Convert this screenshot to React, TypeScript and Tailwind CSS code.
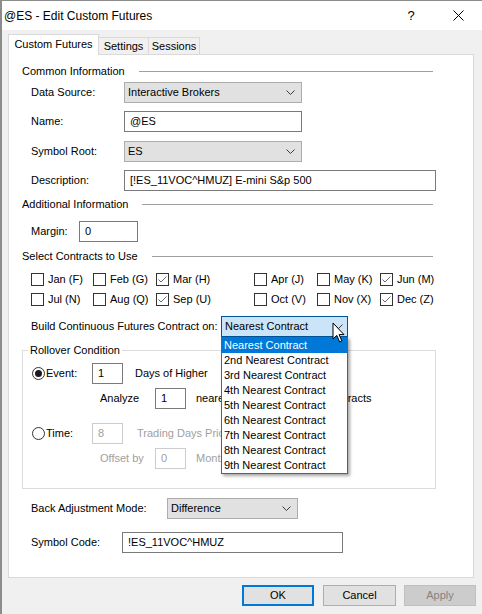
import type { ReactNode } from 'react'

const months: { label: string; checked: boolean }[][] = [
  [
    { label: 'Jan (F)', checked: false },
    { label: 'Feb (G)', checked: false },
    { label: 'Mar (H)', checked: true },
    { label: 'Apr (J)', checked: false },
    { label: 'May (K)', checked: false },
    { label: 'Jun (M)', checked: true },
  ],
  [
    { label: 'Jul (N)', checked: false },
    { label: 'Aug (Q)', checked: false },
    { label: 'Sep (U)', checked: true },
    { label: 'Oct (V)', checked: false },
    { label: 'Nov (X)', checked: false },
    { label: 'Dec (Z)', checked: true },
  ],
]

const contractOptions = [
  'Nearest Contract',
  '2nd Nearest Contract',
  '3rd Nearest Contract',
  '4th Nearest Contract',
  '5th Nearest Contract',
  '6th Nearest Contract',
  '7th Nearest Contract',
  '8th Nearest Contract',
  '9th Nearest Contract',
]

function Chevron() {
  return (
    <svg width="9" height="5" viewBox="0 0 9 5" className="shrink-0">
      <path d="M0.5 0.5 L4.5 4.5 L8.5 0.5" fill="none" stroke="#3c3c3c" strokeWidth="1" />
    </svg>
  )
}

function Select({ value, className }: { value: string; className: string }) {
  return (
    <div className={`h-[21px] flex items-center justify-between pl-[3px] pr-[6px] border bg-[#e1e1e1] border-[#adadad] ${className}`}>
      <span>{value}</span>
      <Chevron />
    </div>
  )
}

function TextBox({ value, className, disabled }: { value: string; className: string; disabled?: boolean }) {
  return (
    <div
      className={`h-[21px] flex items-center pl-[5px] border bg-white ${
        disabled ? 'border-[#cccccc] text-[#a0a0a0]' : 'border-[#7a7a7a]'
      } ${className}`}
    >
      {value}
    </div>
  )
}

function SectionHeading({ title, className }: { title: string; className: string }) {
  return (
    <div className={`ml-[13px] w-[411px] h-[14px] flex items-center ${className}`}>
      <span>{title}</span>
      <div className="flex-1 h-px bg-[#a0a0a0] ml-[14px]" />
    </div>
  )
}

function Field({ label, labelW, className, children }: { label: string; labelW: string; className: string; children: ReactNode }) {
  return (
    <div className={`ml-[22px] flex items-center ${className}`}>
      <span className={labelW}>{label}</span>
      {children}
    </div>
  )
}

function Check({ label, checked }: { label: string; checked: boolean }) {
  return (
    <div className="flex items-center gap-[4px] h-[14px]">
      <span className="w-[13px] h-[13px] border border-[#333333] bg-white flex items-center justify-center">
        {checked && (
          <svg width="9" height="7" viewBox="0 0 9 7">
            <path d="M0.5 3.5 L3 6 L8.5 0.5" fill="none" stroke="#6a6a6a" strokeWidth="1" />
          </svg>
        )}
      </span>
      <span>{label}</span>
    </div>
  )
}

function Radio({ on, label }: { on: boolean; label: string }) {
  return (
    <div className="w-[60px] flex items-center gap-[1px]">
      <span className="w-[13px] h-[13px] rounded-full border border-[#333333] bg-white flex items-center justify-center">
        {on && <span className="w-[7px] h-[7px] rounded-full bg-[#1a1a1a]" />}
      </span>
      <span>{label}</span>
    </div>
  )
}

function Cursor() {
  return (
    <svg width="13" height="21" viewBox="0 0 13 21" className="absolute left-[111px] top-[6px] z-30">
      <path d="M1 1 L1 17 L4.8 13.4 L7.6 19.8 L9.8 18.9 L7.1 12.6 L12 12.6 Z" fill="#ffffff" stroke="#000000" strokeWidth="1" strokeLinejoin="miter" />
    </svg>
  )
}

function ContractCombo() {
  return (
    <div className="relative w-[127px]">
      <div className="h-[21px] flex items-center justify-between pl-[3px] pr-[4px] border bg-[#cce4f7] border-[#005499]">
        <span>Nearest Contract</span>
        <Chevron />
      </div>
      <Cursor />
      <div className="absolute left-0 top-full w-[127px] z-20 bg-white border border-[#2a6cae] shadow-[2px_2px_3px_rgba(0,0,0,0.35)]">
        {contractOptions.map((opt, i) => (
          <div key={opt} className={`h-[15px] leading-[15px] pl-[2px] ${i === 0 ? 'bg-[#0078d7] text-white' : ''}`}>
            {opt}
          </div>
        ))}
      </div>
    </div>
  )
}

export default function App() {
  return (
    <div className="w-[482px] h-[614px] bg-[#f0f0f0] border-l-2 border-t border-[#8c8c8c] font-['Liberation_Sans',Arial,sans-serif] text-[11px] text-black flex flex-col overflow-hidden">
      {/* Title bar */}
      <div className="h-[29px] bg-white flex items-center pl-[2px] shrink-0">
        <span className="text-[12px]">@ES - Edit Custom Futures</span>
        <span className="ml-auto text-[13px] w-[12px] text-center mr-[36px]">?</span>
        <svg width="11" height="11" viewBox="0 0 11 11" className="mr-[18px]">
          <path d="M0.5 0.5 L10.5 10.5 M10.5 0.5 L0.5 10.5" stroke="#000000" strokeWidth="1" />
        </svg>
      </div>

      {/* Tabs */}
      <div className="h-[24px] flex items-end ml-[6px] shrink-0">
        <div className="relative z-10 -mb-px h-[21px] w-[91px] bg-white border border-b-0 border-[#d9d9d9] flex items-center justify-center pb-[2px]">
          Custom Futures
        </div>
        <div className="h-[17px] w-[50px] border-t border-r border-[#d9d9d9] flex items-center justify-center">Settings</div>
        <div className="h-[17px] w-[51px] border-t border-r border-[#d9d9d9] flex items-center justify-center">Sessions</div>
      </div>

      {/* Tab page */}
      <div className="ml-[6px] w-[466px] h-[524px] bg-white border border-[#d9d9d9] flex flex-col shrink-0">
        <SectionHeading title="Common Information" className="mt-[9px]" />
        <Field label="Data Source:" labelW="w-[93px]" className="mt-[4px]">
          <Select value="Interactive Brokers" className="w-[178px]" />
        </Field>
        <Field label="Name:" labelW="w-[93px]" className="mt-[8px]">
          <TextBox value="@ES" className="w-[178px]" />
        </Field>
        <Field label="Symbol Root:" labelW="w-[93px]" className="mt-[9px]">
          <Select value="ES" className="w-[178px]" />
        </Field>
        <Field label="Description:" labelW="w-[93px]" className="mt-[8px]">
          <TextBox value="[!ES_11VOC^HMUZ] E-mini S&p 500" className="w-[312px]" />
        </Field>

        <SectionHeading title="Additional Information" className="mt-[6px]" />
        <Field label="Margin:" labelW="w-[48px]" className="mt-[10px]">
          <TextBox value="0" className="w-[59px]" />
        </Field>

        <SectionHeading title="Select Contracts to Use" className="mt-[7px]" />
        {months.map((row, r) => (
          <div
            key={r}
            className={`ml-[22px] grid grid-cols-[62px_63px_98px_63px_63px_auto] ${r === 0 ? 'mt-[9px]' : 'mt-[6px]'}`}
          >
            {row.map((m) => (
              <Check key={m.label} label={m.label} checked={m.checked} />
            ))}
          </div>
        ))}

        <Field label="Build Continuous Futures Contract on:" labelW="w-[190px]" className="mt-[10px] relative z-20">
          <ContractCombo />
        </Field>

        {/* Rollover group */}
        <div className="ml-[13px] mt-[13px] w-[414px] h-[139px] border border-[#dcdcdc] shrink-0">
          <span className="block w-fit -mt-[8px] ml-[5px] px-[2px] bg-white h-[14px] leading-[14px]">Rollover Condition</span>
          <div className="mt-[6px] ml-[9px] flex items-center">
            <Radio on label="Event:" />
            <TextBox value="1" className="w-[31px]" />
            <span className="ml-[12px]">Days of Higher</span>
          </div>
          <div className="mt-[4px] ml-[77px] flex items-center">
            <span className="w-[55px]">Analyze</span>
            <TextBox value="1" className="w-[31px]" />
            <span className="ml-[10px]">nearest back month future contracts</span>
          </div>
          <div className="mt-[14px] ml-[9px] flex items-center">
            <Radio on={false} label="Time:" />
            <TextBox value="8" disabled className="w-[31px]" />
            <span className="ml-[14px] text-[#a0a0a0]">Trading Days Prior</span>
          </div>
          <div className="mt-[4px] ml-[77px] flex items-center">
            <span className="w-[55px] text-[#a0a0a0]">Offset by</span>
            <TextBox value="0" disabled className="w-[31px]" />
            <span className="ml-[10px] text-[#a0a0a0]">Months</span>
          </div>
        </div>

        <Field label="Back Adjustment Mode:" labelW="w-[136px]" className="mt-[9px]">
          <Select value="Difference" className="w-[131px]" />
        </Field>
        <Field label="Symbol Code:" labelW="w-[91px]" className="mt-[13px]">
          <TextBox value="!ES_11VOC^HMUZ" className="w-[221px]" />
        </Field>
      </div>

      {/* Dialog buttons */}
      <div className="mt-[7px] flex justify-end pr-[6px] gap-[8px] shrink-0">
        <div className="w-[72px] h-[21px] bg-[#e1e1e1] border-2 border-[#0078d7] flex items-center justify-center">OK</div>
        <div className="ml-[1px] w-[73px] h-[21px] bg-[#e1e1e1] border border-[#adadad] flex items-center justify-center">Cancel</div>
        <div className="w-[72px] h-[21px] bg-[#cccccc] border border-[#bfbfbf] text-[#838383] flex items-center justify-center">Apply</div>
      </div>
    </div>
  )
}
